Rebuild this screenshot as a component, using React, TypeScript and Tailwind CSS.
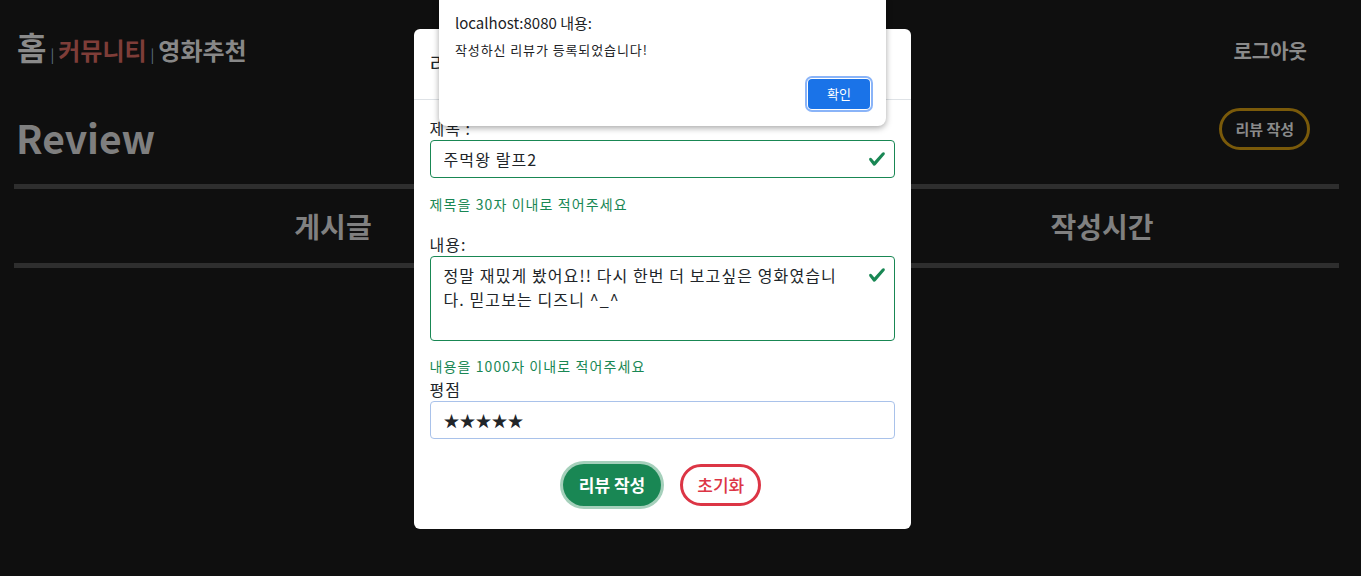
import React from 'react';

const font = { fontFamily: '"Noto Sans CJK KR", "Noto Sans", sans-serif' };

function ValidCheck() {
  return (
    <svg viewBox="0 0 8 8" className="h-[18px] w-[18px]">
      <path
        fill="#198754"
        d="M2.3 6.73.6 4.53c-.4-1.04.46-1.4 1.1-.8l1.1 1.4 3.4-3.8c.6-.63 1.6-.27 1.2.7l-4 4.6c-.43.5-.8.4-1.1.1z"
      />
    </svg>
  );
}

function ReviewModal() {
  return (
    <div className="absolute inset-0 flex justify-center">
      <div className="mt-[29px] ml-[-37px] h-[500px] w-[497px] rounded-[6px] bg-white text-[#212529]">
        <div className="flex h-[71px] items-center border-b border-[#dee2e6] px-[16px]">
          <h5 className="text-[20px] font-normal">리뷰 작성하기</h5>
        </div>
        <div className="px-[16px] pt-[16px] tracking-[1px]">
          <label className="block text-[16px] leading-[24px]">제목 :</label>
          <div className="relative">
            <input
              readOnly
              value="주먹왕 랄프2"
              className="h-[38px] w-full rounded-[4px] border border-[#198754] pl-[13px] pr-[36px] text-[16px] tracking-[1.1px] text-[#212529] outline-none"
              style={font}
            />
            <span className="absolute right-[9px] top-[10px]">
              <ValidCheck />
            </span>
          </div>
          <p className="mt-[16px] text-[14px] leading-[21px] tracking-[1.1px] text-[#198754]">제목을 30자 이내로 적어주세요</p>

          <label className="mt-[17px] block text-[16px] leading-[24px]">내용:</label>
          <div className="relative">
            <textarea
              readOnly
              value={'정말 재밌게 봤어요!! 다시 한번 더 보고싶은 영화였습니\n다. 믿고보는 디즈니 ^_^'}
              className="block h-[85px] w-full resize-none rounded-[4px] border border-[#198754] py-[6px] pl-[13px] pr-[36px] text-[16px] leading-[24px] tracking-[1.1px] text-[#212529] outline-none"
              style={font}
            />
            <span className="absolute right-[9px] top-[10px]">
              <ValidCheck />
            </span>
          </div>
          <p className="mt-[15px] text-[14px] leading-[21px] tracking-[1.1px] text-[#198754]">내용을 1000자 이내로 적어주세요</p>

          <label className="block text-[16px] leading-[24px]">평점</label>
          <input
            readOnly
            value="★★★★★"
            className="h-[38px] w-full rounded-[4px] border border-[#a9c2ea] pl-[13px] text-[16px] tracking-normal text-[#212529] outline-none"
            style={font}
          />

          <div className="mt-[25px] flex justify-center gap-[19px] tracking-normal">
            <button className="h-[42px] rounded-full bg-[#198754] px-[16px] text-[17px] font-bold text-white ring-[3px] ring-[#a5d0bb]">
              리뷰 작성
            </button>
            <button className="h-[42px] rounded-full border-[3px] border-[#dc3545] px-[14px] text-[17px] font-medium text-[#dc3545]">
              초기화
            </button>
          </div>
        </div>
      </div>
    </div>
  );
}

function AlertBox() {
  return (
    <div className="absolute left-[439px] top-0 h-[126px] w-[447px] rounded-b-[8px] bg-white shadow-[0_2px_6px_rgba(0,0,0,0.35)]">
      <div className="px-[16px] pt-[12px] text-[#202124]">
        <p className="text-[15px] leading-[22px]">localhost:8080 내용:</p>
        <p className="mt-[7px] text-[13px] leading-[18px] tracking-[0.9px]">작성하신 리뷰가 등록되었습니다!</p>
      </div>
      <div className="mt-[20px] flex justify-end pr-[16px]">
        <button className="h-[30px] w-[62px] rounded-[4px] bg-[#1a73e8] text-[13px] text-white ring-2 ring-[#8ab4f8] ring-offset-1">
          확인
        </button>
      </div>
    </div>
  );
}

export default function App() {
  return (
    <div className="relative h-[576px] overflow-hidden bg-[#0f0f0f]" style={font}>
      <header className="flex items-start justify-between pl-[17px] pr-[54px] pt-[24px]">
        <nav className="flex items-baseline font-bold">
          <span className="text-[32px] leading-[44px] text-[#8a8a8a]">홈</span>
          <span className="mx-[4px] text-[14px] font-normal text-[#5d7486]">|</span>
          <span className="text-[24px] text-[#7e3d38]">커뮤니티</span>
          <span className="mx-[4px] text-[14px] font-normal text-[#5d7486]">|</span>
          <span className="text-[24px] text-[#888888]">영화추천</span>
        </nav>
        <span className="mt-[12px] text-[20px] font-bold text-[#8a8a8a]">로그아웃</span>
      </header>

      <div className="mt-[38px] flex items-start justify-between pl-[16px] pr-[51px]">
        <h1 className="mt-[12px] text-[39px] font-bold leading-none text-[#7f7f7f]">Review</h1>
        <button className="mt-[2px] h-[42px] rounded-full border-[3px] border-[#7a5a0a] px-[13px] text-[15px] font-bold text-[#8a8a8a]">
          리뷰 작성
        </button>
      </div>

      <div className="ml-[14px] mt-[27px] w-[1325px]">
        <div className="h-[5px] bg-[#2e2e2e]" />
        <div className="grid h-[74px] grid-cols-[638px_213px_1fr] items-center text-center text-[28px] font-bold text-[#808080]">
          <span>게시글</span>
          <span>작성자</span>
          <span>작성시간</span>
        </div>
        <div className="h-[5px] bg-[#2e2e2e]" />
      </div>

      <ReviewModal />
      <AlertBox />
    </div>
  );
}
